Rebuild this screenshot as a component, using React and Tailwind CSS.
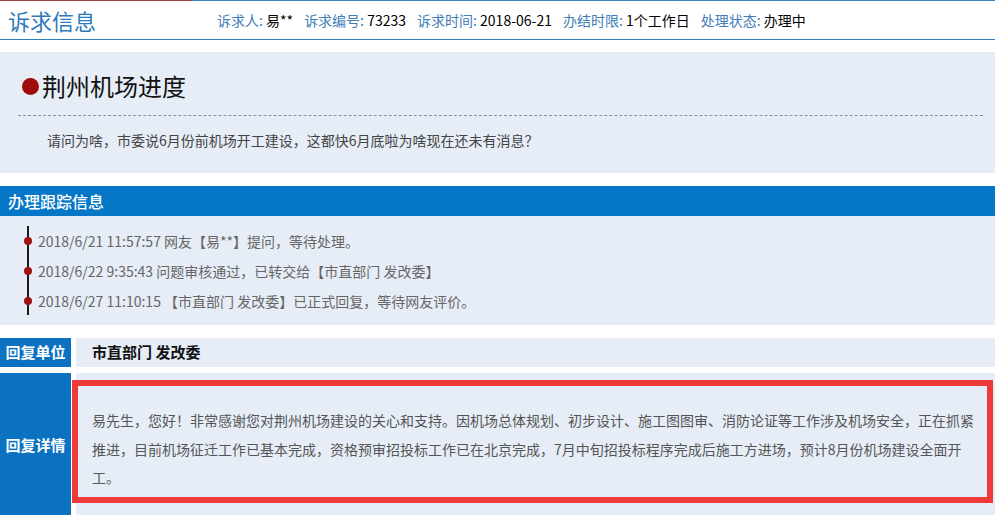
import React from "react";

const meta = [
  ["诉求人:", "易**"],
  ["诉求编号:", "73233"],
  ["诉求时间:", "2018-06-21"],
  ["办结时限:", "1个工作日"],
  ["处理状态:", "办理中"],
];

const track = [
  "2018/6/21 11:57:57 网友【易**】提问，等待处理。",
  "2018/6/22 9:35:43 问题审核通过，已转交给【市直部门 发改委】",
  "2018/6/27 11:10:15 【市直部门 发改委】已正式回复，等待网友评价。",
];

export default function App() {
  return (
    <div className="w-[995px] min-h-[515px] overflow-hidden bg-white font-['Microsoft_YaHei','Noto_Sans_CJK_SC',sans-serif]">
      {/* top rule */}
      <div className="flex h-px">
        <div className="w-[193px] bg-[#a8453d]" />
        <div className="flex-1 bg-[#3584c2]" />
      </div>

      {/* HEADER */}
      <div className="flex h-[39px] items-center border-b border-[#2f7fbf]">
        <h1 className="w-[217px] pl-2 text-[22px] leading-none text-[#2e7ab9]">诉求信息</h1>
        <div className="flex gap-[11px] text-[14px] leading-none">
          {meta.map(([k, v]) => (
            <span key={k}>
              <span className="text-[#3f7db8]">{k}</span>{" "}
              <span className="text-black">{v}</span>
            </span>
          ))}
        </div>
      </div>

      {/* QUESTION */}
      <div className="mt-3 h-[121px] bg-[#e6edf7] pt-[17px]">
        <div className="flex h-[34px] items-center pl-[22px]">
          <span className="h-[17px] w-[17px] rounded-full bg-[#a00c0c]" />
          <span className="ml-[3px] text-[24px] leading-none text-[#111]">荆州机场进度</span>
        </div>
        <div className="ml-[18px] mr-[12px] mt-[12px] border-t border-dashed border-[#7f93ab]" />
        <p className="mt-[14px] pl-[47px] text-[14px] leading-[20px] text-[#444]">
          请问为啥，市委说6月份前机场开工建设，这都快6月底啦为啥现在还未有消息？
        </p>
      </div>

      {/* TRACKING */}
      <div className="mt-[13px] flex h-[30px] items-center bg-[#0676c6] pl-2 text-[16px] font-medium text-white">
        办理跟踪信息
      </div>
      <div className="h-[109px] bg-[#e6edf7] pt-[10px]">
        <ul className="ml-[27px] h-[89px] border-l-2 border-[#1a1a1a]">
          {track.map((t) => (
            <li key={t} className="relative flex h-[30px] items-center pl-[9px] text-[14px] text-[#666]">
              <span className="absolute -left-[5px] top-[11px] h-[8px] w-[8px] rounded-full bg-[#a01212]" />
              {t}
            </li>
          ))}
        </ul>
      </div>

      {/* REPLY UNIT */}
      <div className="mt-[13px] flex h-[29px] gap-[5px]">
        <div className="flex w-[71px] items-center justify-center bg-[#0b72c2] text-[15px] font-bold text-white">
          回复单位
        </div>
        <div className="flex flex-1 items-center bg-[#e6edf7] pl-[16px] text-[15px] font-bold text-[#111]">
          市直部门 发改委
        </div>
      </div>

      {/* REPLY DETAIL */}
      <div className="mt-[6px] flex h-[144px] gap-[5px]">
        <div className="flex w-[71px] items-center justify-center bg-[#0b72c2] text-[15px] font-bold text-white">
          回复详情
        </div>
        <div className="flex-1 bg-[#e6edf7]">
          <div className="-ml-[4px] mt-[7px] h-[123px] w-[921px] border-[6px] border-[#f03a3a] pl-[14px] pt-[20px]">
            <p className="w-[888px] text-[14px] leading-[28.5px] text-[#555] font-['SimSun','Noto_Sans_CJK_SC',sans-serif]">
              易先生，您好！非常感谢您对荆州机场建设的关心和支持。因机场总体规划、初步设计、施工图图审、消防论证等工作涉及机场安全，正在抓紧推进，目前机场征迁工作已基本完成，资格预审招投标工作已在北京完成，7月中旬招投标程序完成后施工方进场，预计8月份机场建设全面开工。
            </p>
          </div>
        </div>
      </div>
    </div>
  );
}
